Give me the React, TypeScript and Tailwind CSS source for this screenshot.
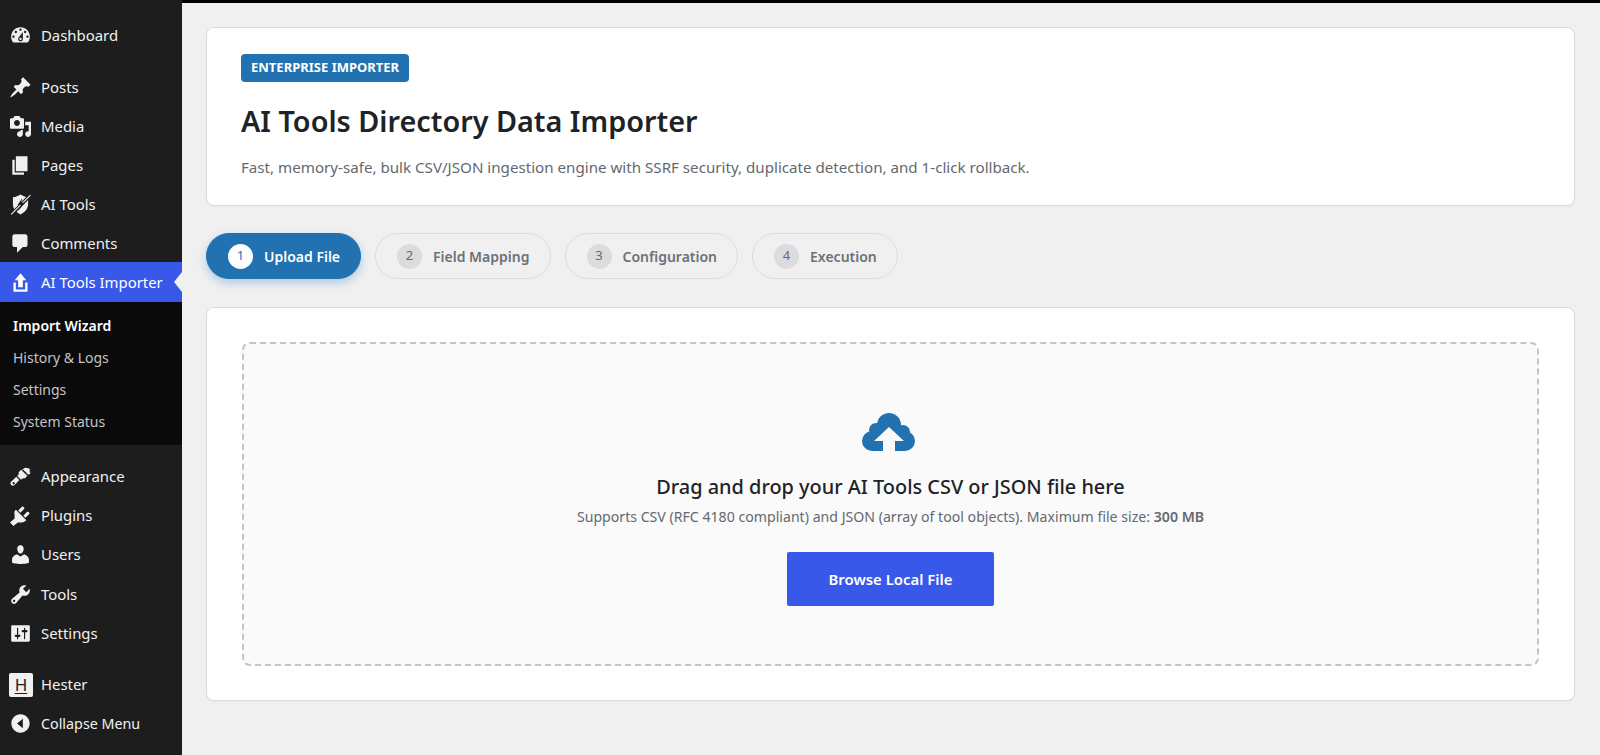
const paths = {
  dashboard:
    "M3.76 16h12.48c1.1-1.37 1.76-3.11 1.76-5 0-4.42-3.58-8-8-8s-8 3.58-8 8c0 1.89.66 3.63 1.76 5zM10 4c.55 0 1 .45 1 1s-.45 1-1 1-1-.45-1-1 .45-1 1-1zM6 6c.55 0 1 .45 1 1s-.45 1-1 1-1-.45-1-1 .45-1 1-1zm8 0c.55 0 1 .45 1 1s-.45 1-1 1-1-.45-1-1 .45-1 1-1zm-5.37 5.55L12 7v6c0 1.1-.9 2-2 2s-2-.9-2-2c0-.57.24-1.08.63-1.45zM4 10c.55 0 1 .45 1 1s-.45 1-1 1-1-.45-1-1 .45-1 1-1zm12 0c.55 0 1 .45 1 1s-.45 1-1 1-1-.45-1-1 .45-1 1-1zm-5 3c0-.55-.45-1-1-1s-1 .45-1 1 .45 1 1 1 1-.45 1-1z",
  post: "M10.44 3.02l1.82-1.82 6.36 6.35-1.83 1.82c-1.05-.68-2.48-.57-3.41.36l-.75.75c-.92.93-1.04 2.35-.35 3.41l-1.83 1.82-2.41-2.41-2.8 2.79c-.42.42-3.38 2.71-3.8 2.29s1.86-3.39 2.28-3.81l2.79-2.79L4.1 9.36l1.83-1.82c1.05.69 2.48.57 3.4-.36l.75-.75c.93-.92 1.05-2.35.36-3.41z",
  media:
    "M13 11V4c0-.55-.45-1-1-1h-1.67L9 1H5L3.67 3H2c-.55 0-1 .45-1 1v7c0 .55.45 1 1 1h10c.55 0 1-.45 1-1zM7 4.5c1.38 0 2.5 1.12 2.5 2.5S8.38 9.5 7 9.5 4.5 8.38 4.5 7 5.62 4.5 7 4.5zM14 6h5v10.5c0 1.38-1.12 2.5-2.5 2.5S14 17.88 14 16.5s1.12-2.5 2.5-2.5c.17 0 .34.02.5.05V9h-3V6zm-4 8.05V13h2v3.500c0 1.38-1.12 2.5-2.5 2.5S7 17.88 7 16.5 8.12 14 9.5 14c.17 0 .34.02.5.05z",
  page: "M6 15V2h10v13H6zm-1 1h8v2H3V5h2v11z",
  comment:
    "M5 2h9c1.1 0 2 .9 2 2v7c0 1.1-.9 2-2 2h-2l-5 5v-5H5c-1.1 0-2-.9-2-2V4c0-1.1.9-2 2-2z",
  upload: "M8 14V8H5l5-6 5 6h-3v6H8zm-2 2v-6H4v8h12.01v-8H14v6H6z",
  appearance:
    "M11.600 3.300l5.100 5.100c.9-.5 1.700-.9 2-1.500-.6-.2-1.200-.6-1.500-1.100.5.1 1 0 1.300-.3-.5-.3-1-.8-1.200-1.300.5 0 .9-.2 1.200-.5-1.100-.6-2.900-1.300-4.100-1.300-1 0-2.100.9-2.800 1.900zM10.500 4.200L8.300 6.500c.4 1 .2 1.900-.5 2.500l-.6.500 3.300 3.300.6-.6c.7-.7 1.600-.9 2.500-.5l2.300-2.300zM6.400 10.300l-4.400 4.100c-.9.9-.9 2 0 2.900s2 .9 2.900 0l4.100-4.400zM3.400 15.100c.4-.4 1-.4 1.400 0s.4 1 0 1.400-1 .4-1.400 0-.4-1 0-1.400z",
  plugin:
    "M13.11 4.36L9.87 7.6 8 5.73l3.24-3.24c.35-.34 1.05-.2 1.56.32.52.51.66 1.21.31 1.55zM5.11 6.13l.91-1.12 9.01 9.01-1.19.84c-.71.71-2.63 1.16-3.67 1.16H7.7L4 19l-3-3 3.940-3.440V9.790c0-1.030-.54-2.950.17-3.660zM15.640 6.890L12.400 10.130l1.870 1.870 3.240-3.240c.34-.35.2-1.050-.32-1.560-.51-.52-1.210-.66-1.550-.31z",
  users:
    "M10 9.25c-2.27 0-2.73-3.44-2.73-3.44C7 4.02 7.82 2 9.97 2c2.16 0 2.98 2.02 2.71 3.81 0 0-.41 3.44-2.68 3.44zm0 2.57L12.72 10c2.39 0 4.52 2.33 4.52 4.53v2.49s-3.65 1.13-7.24 1.13c-3.65 0-7.24-1.13-7.24-1.13v-2.49c0-2.25 1.94-4.48 4.47-4.48z",
  tools:
    "M16.68 9.77c-1.34 1.34-3.3 1.67-4.95.99l-5.41 6.52c-.99.99-2.59.99-3.57 0-.99-.98-.99-2.58 0-3.57l6.52-5.42c-.68-1.65-.35-3.61.99-4.95 1.28-1.28 3.12-1.62 4.72-1.06l-2.89 2.89 2.82 2.82 2.86-2.87c.53 1.58.18 3.39-1.09 4.67zM3.81 16.21c.4.39 1.04.39 1.43 0 .4-.4.4-1.04 0-1.43-.39-.4-1.03-.4-1.43 0-.39.39-.39 1.03 0 1.43z",
  settings:
    "M18 16V4c0-.55-.45-1-1-1H3c-.55 0-1 .45-1 1v12c0 .55.45 1 1 1h14c.55 0 1-.45 1-1zM8 11h1c.55 0 1 .45 1 1s-.45 1-1 1H8v1.5c0 .28-.22.5-.5.5s-.5-.22-.5-.5V13H6c-.55 0-1-.45-1-1s.45-1 1-1h1V5.500c0-.28.22-.5.5-.5s.5.22.5.5V11zm5-2h-1c-.55 0-1-.45-1-1s.45-1 1-1h1V5.500c0-.28.22-.5.5-.5s.5.22.5.5V7h1c.55 0 1 .45 1 1s-.45 1-1 1h-1v5.500c0 .28-.22.5-.5.5s-.5-.22-.5-.5V9z",
  collapse:
    "M10 2.16c4.33 0 7.84 3.51 7.84 7.84s-3.51 7.84-7.84 7.84S2.16 14.33 2.16 10 5.670 2.16 10 2.16zM12 14V6l-5 4z",
};

function Dash({ d }: { d: string }) {
  return (
    <svg viewBox="1 1 18 18" className="h-[21px] w-[21px] shrink-0 fill-[#f0f0f1]">
      <path d={d} fillRule="evenodd" />
    </svg>
  );
}

function ShieldIcon() {
  return (
    <svg viewBox="1 1 18 18" className="h-[21px] w-[21px] shrink-0">
      <path
        d="M10 1.500c2 1.400 4 2.100 6.500 2.300v5.700c0 4-2.700 7-6.500 9-3.800-2-6.500-5-6.500-9V3.800c2.500-.2 4.500-.9 6.500-2.300z"
        fill="#f0f0f1"
      />
      <path d="M18 2.500L3 18" stroke="#1d1d1d" strokeWidth="3" />
      <path d="M18.500 2L2 18.500" stroke="#f0f0f1" strokeWidth="1" />
      <path d="M11.500 4.500L7.500 10.500h3l-2 4.500 5-6.500h-3z" fill="#1d1d1d" />
    </svg>
  );
}

function MenuItem({
  icon,
  label,
  small,
}: {
  icon: React.ReactNode;
  label: string;
  small?: boolean;
}) {
  return (
    <div
      className={`flex h-[39px] items-center pl-[10px] text-[#f0f0f1] ${
        small ? "text-[14.3px]" : "text-[14.9px]"
      }`}
    >
      <span className="mr-[11px] flex w-[20px] justify-center">{icon}</span>
      {label}
    </div>
  );
}

function Sidebar() {
  return (
    <aside className="flex w-[182px] shrink-0 flex-col bg-[#1d1d1d] pt-[16px]">
      <MenuItem icon={<Dash d={paths.dashboard} />} label="Dashboard" />
      <div className="h-[13px]" />
      <MenuItem icon={<Dash d={paths.post} />} label="Posts" />
      <MenuItem icon={<Dash d={paths.media} />} label="Media" />
      <MenuItem icon={<Dash d={paths.page} />} label="Pages" />
      <MenuItem icon={<ShieldIcon />} label="AI Tools" />
      <MenuItem icon={<Dash d={paths.comment} />} label="Comments" />

      {/* current menu */}
      <div className="relative -mt-[1px] flex h-[40px] items-center bg-[#3858e9] pl-[10px] text-[14.9px] text-white">
        <span className="mr-[11px] flex w-[20px] justify-center">
          <svg viewBox="1 1 18 18" className="h-[21px] w-[21px] shrink-0 fill-white">
            <path d={paths.upload} fillRule="evenodd" />
          </svg>
        </span>
        AI Tools Importer
        <span className="absolute right-0 top-[10px] h-0 w-0 border-y-[10px] border-r-[8px] border-y-transparent border-r-[#f0f0f1]" />
      </div>
      <div className="flex flex-col bg-[#0a0a0a] pb-[8px] pt-[7px] pl-[13px] text-[14px] text-[#c3c4c7]">
        <div className="flex h-[32px] items-center font-semibold text-white">Import Wizard</div>
        <div className="flex h-[32px] items-center">History &amp; Logs</div>
        <div className="flex h-[32px] items-center">Settings</div>
        <div className="flex h-[32px] items-center">System Status</div>
      </div>

      <div className="h-[12px]" />
      <MenuItem icon={<Dash d={paths.appearance} />} label="Appearance" />
      <MenuItem icon={<Dash d={paths.plugin} />} label="Plugins" />
      <MenuItem icon={<Dash d={paths.users} />} label="Users" />
      <div className="h-[1px]" />
      <MenuItem icon={<Dash d={paths.tools} />} label="Tools" />
      <MenuItem icon={<Dash d={paths.settings} />} label="Settings" />
      <div className="h-[12px]" />
      <MenuItem
        icon={
          <span className="ml-[2px] flex h-[24px] w-[24px] shrink-0 items-center justify-center rounded-[2px] bg-[#f0f0f1] pb-[1px] text-[17px] font-normal leading-none text-[#1d1d1d] underline underline-offset-2">
            H
          </span>
        }
        label="Hester"
      />
      <MenuItem icon={<Dash d={paths.collapse} />} label="Collapse Menu" small />
    </aside>
  );
}

function Step({ n, label, active }: { n: number; label: string; active?: boolean }) {
  return (
    <div
      className={`flex h-[46px] items-center gap-[11px] rounded-full border pl-[21px] pr-[20px] text-[14px] font-semibold ${
        active
          ? "border-[#2271b1] bg-[#2271b1] text-white shadow-[0_4px_10px_rgba(34,113,177,0.3)]"
          : "border-[#dcdcde] text-[#6c7177]"
      }`}
    >
      <span
        className={`flex h-[25px] w-[25px] items-center justify-center rounded-full text-[13px] font-normal ${
          active ? "bg-white text-[#2271b1]" : "bg-[#dcdcde] text-[#646970]"
        }`}
      >
        {n}
      </span>
      {label}
    </div>
  );
}

function CloudIcon() {
  return (
    <svg viewBox="0 0 53 38" className="-ml-[4px] h-[38px] w-[53px]">
      <g fill="#2271b1">
        <circle cx="27" cy="12" r="12" />
        <circle cx="14" cy="17" r="7" />
        <circle cx="41" cy="19" r="7" />
        <circle cx="10" cy="28" r="10" />
        <circle cx="43" cy="28" r="10" />
        <rect x="10" y="16" width="33" height="22" />
      </g>
      <path d="M27 14L42 28H33V38H21V28H12z" fill="#fafafa" />
    </svg>
  );
}

export default function App() {
  return (
    <div className="flex h-[755px] w-[1600px] overflow-hidden bg-[#f0f0f1] font-['Noto_Sans',sans-serif]">
      <Sidebar />
      <div className="flex min-w-0 flex-1 flex-col">
        <div className="h-[3px] shrink-0 bg-black" />
        <main className="flex-1 pl-[24px] pr-[25px] pt-[24px]">
          {/* HEADER CARD */}
          <section className="h-[179px] rounded-[8px] border border-[#dcdcde] bg-white pl-[34px] pt-[26px] shadow-[0_1px_2px_rgba(0,0,0,0.04)]">
            <span className="inline-flex h-[28px] items-center rounded-[4px] bg-[#2271b1] px-[10px] text-[13px] font-bold text-white">
              ENTERPRISE IMPORTER
            </span>
            <h1 className="mt-[20px] text-[28.8px] font-semibold leading-[38px] text-[#1d2327]">
              AI Tools Directory Data Importer
            </h1>
            <p className="mt-[17px] text-[15.15px] leading-[20px] text-[#646970]">
              Fast, memory-safe, bulk CSV/JSON ingestion engine with SSRF security, duplicate detection, and 1-click rollback.
            </p>
          </section>

          {/* STEPS */}
          <div className="mt-[27px] flex gap-[14px]">
            <Step n={1} label="Upload File" active />
            <Step n={2} label="Field Mapping" />
            <Step n={3} label="Configuration" />
            <Step n={4} label="Execution" />
          </div>

          {/* UPLOAD CARD */}
          <section className="mt-[28px] h-[394px] rounded-[8px] border border-[#dcdcde] bg-white px-[35px] py-[34px] shadow-[0_1px_2px_rgba(0,0,0,0.04)]">
            <div className="flex h-[324px] flex-col items-center rounded-[8px] border-2 border-dashed border-[#c3c4c7] bg-[#fafafa] pt-[69px]">
              <CloudIcon />
              <h2 className="mt-[22px] text-[19.9px] font-medium leading-[28px] text-[#1d2327]">
                Drag and drop your AI Tools CSV or JSON file here
              </h2>
              <p className="mt-[6px] text-[14.14px] leading-[20px] text-[#646970]">
                Supports CSV (RFC 4180 compliant) and JSON (array of tool objects). Maximum file size:{" "}
                <strong className="font-semibold">300 MB</strong>
              </p>
              <button className="mt-[25px] h-[54px] w-[207px] rounded-[2px] bg-[#3858e9] text-[14.9px] font-semibold text-white">
                Browse Local File
              </button>
            </div>
          </section>
        </main>
      </div>
    </div>
  );
}
